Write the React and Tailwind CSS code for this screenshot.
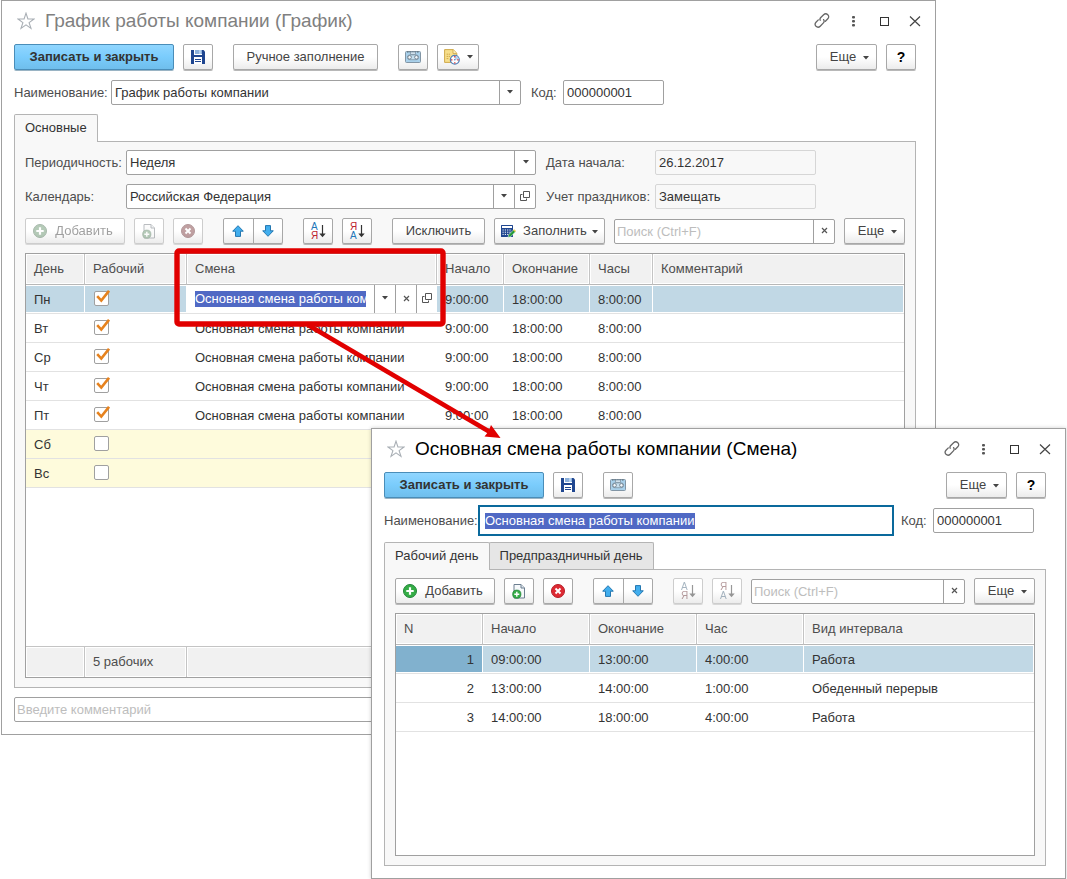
import React from "react";

/* ---------- icons ---------- */

function StarIcon() {
  return (
    <svg className="h-[18px] w-[18px] shrink-0" viewBox="0 0 18 18" fill="none" stroke="#a9afb5" strokeWidth="1.1">
      <path d="M9 1.2 L10.9 7 H17 L12.1 10.6 L14 16.4 L9 12.9 L4 16.4 L5.9 10.6 L1 7 H7.1 Z" />
    </svg>
  );
}

function LinkIcon() {
  return (
    <svg className="h-4 w-4" viewBox="0 0 16 16" fill="none" stroke="#666" strokeWidth="1.3" strokeLinecap="round">
      <path d="M6.2 7.2 C5.6 6.2 6 5.3 6.8 4.5 L9.6 1.8 C10.8 0.6 12.6 0.6 13.8 1.7 C15 2.9 15 4.6 13.8 5.8 L11.4 8.2" />
      <path d="M9.6 6.6 C10.3 7.6 10.1 9.2 9.2 10.1 L6.2 13.2 C5 14.4 3.2 14.4 2 13.3 C0.9 12.1 0.9 10.4 2 9.2 L4.3 6.9" />
    </svg>
  );
}

function DotsIcon() {
  return (
    <svg className="h-4 w-4" viewBox="0 0 16 16" fill="#555">
      <rect x="7" y="3" width="3" height="2.6" rx="1" />
      <rect x="7" y="7" width="3" height="2.6" rx="1" />
      <rect x="7" y="11" width="3" height="2.6" rx="1" />
    </svg>
  );
}

function MaximizeIcon() {
  return (
    <svg className="h-4 w-4" viewBox="0 0 16 16" fill="none" stroke="#333">
      <rect x="4.5" y="4.5" width="8" height="8" />
    </svg>
  );
}

function CloseIcon() {
  return (
    <svg className="h-4 w-4" viewBox="0 0 16 16" fill="none" stroke="#444" strokeWidth="1.2">
      <path d="M3 3.5 L13 13 M13 3.5 L3 13" />
    </svg>
  );
}

function SaveIcon() {
  return (
    <svg className="h-[14px] w-[14px]" viewBox="0 0 14 14">
      <path d="M0 0 H12.5 L14 1.5 V14 H0 Z" fill="#1f4690" />
      <rect x="3" y="0" width="8" height="5" fill="#fff" />
      <rect x="4" y="0" width="7" height="4" fill="#8db1dc" />
      <rect x="8" y="0" width="2" height="4" fill="#b4d0ee" />
      <rect x="3" y="7" width="8" height="7" fill="#fff" />
      <path d="M4 9.500 H10 M4 11.500 H10" stroke="#1f4690" />
    </svg>
  );
}

function CassetteIcon() {
  return (
    <svg className="h-[12px] w-[16px]" viewBox="0 0 16 12">
      <rect x="0.5" y="0.5" width="15" height="11" rx="1" fill="#a9d0ea" stroke="#8195a5" />
      <path d="M2 1 H14" stroke="#56646f" strokeDasharray="1.5 1" />
      <path d="M5.5 1 H10.5 V3.4 H5.5 Z" fill="#d9e9f3" stroke="#8195a5" strokeWidth="0.8" />
      <rect x="2.4" y="3.9" width="11.2" height="4.8" rx="2.4" fill="#c7e0f0" stroke="#7f93a2" strokeWidth="0.8" />
      <circle cx="4.6" cy="6.3" r="1.8" fill="#f2f6f9" stroke="#6d7f8d" strokeWidth="0.9" />
      <circle cx="11.4" cy="6.3" r="1.8" fill="#f2f6f9" stroke="#6d7f8d" strokeWidth="0.9" />
    </svg>
  );
}

function ScheduleIcon() {
  return (
    <svg className="h-4 w-4" viewBox="0 0 16 16">
      <path d="M0.6 0.6 H9.2 L12.8 4.2 V13.4 H0.6 Z" fill="#f7df8c" stroke="#cfa94a" />
      <path d="M9 0.8 V4.4 H12.6" fill="#fdf3c9" stroke="#cfa94a" strokeWidth="0.9" />
      <path d="M2.6 5.2 H6 M2.6 7.4 H6 M2.6 9.6 H5" stroke="#cfa94a" strokeDasharray="1.6 0.6" />
      <circle cx="10.8" cy="10.8" r="4.4" fill="#fff" stroke="#4d7fb8" strokeWidth="1.3" />
      <path d="M10.8 10.8 V6.8 A4 4 0 0 1 14.8 10.8 Z" fill="#b9d4ef" />
      <path d="M10.8 7 V8.4 M10.8 13.2 V14.6 M7 10.8 H8.4 M13.2 10.8 H14.6" stroke="#d33" strokeWidth="1.3" />
      <circle cx="10.8" cy="10.8" r="0.8" fill="#4d7fb8" />
    </svg>
  );
}

function Caret() {
  return (
    <svg className="h-[4px] w-[6px] shrink-0" viewBox="0 0 6 4">
      <path d="M0 0 H6 L3 3.5 Z" fill="#444" />
    </svg>
  );
}

function AddIcon() {
  return (
    <svg className="h-[14px] w-[14px] shrink-0" viewBox="0 0 14 14">
      <circle cx="7" cy="7" r="6.5" fill="#35ad46" stroke="#23863a" />
      <path d="M7 3.3 V10.7 M3.3 7 H10.7" stroke="#fff" strokeWidth="2.2" />
    </svg>
  );
}

function CopyIcon() {
  return (
    <svg className="h-[15px] w-[14px]" viewBox="0 0 14 15">
      <path d="M2 0.5 H9 L12.5 4 V14 H2 Z" fill="#f6f9fb" stroke="#6c7f90" />
      <path d="M9 0.5 V4 H12.5" fill="#dfe7ee" stroke="#6c7f90" />
      <circle cx="4.8" cy="10.2" r="4.1" fill="#35ad46" stroke="#23863a" strokeWidth="0.8" />
      <path d="M4.8 7.7 V12.7 M2.3 10.2 H7.3" stroke="#fff" strokeWidth="1.4" />
    </svg>
  );
}

function DeleteIcon() {
  return (
    <svg className="h-[14px] w-[14px]" viewBox="0 0 14 14">
      <circle cx="7" cy="7" r="6.5" fill="#dd2a33" stroke="#b71e28" />
      <path d="M4.5 4.5 L9.5 9.5 M9.5 4.5 L4.5 9.5" stroke="#fff" strokeWidth="1.9" />
    </svg>
  );
}

function ArrowIcon({ down }) {
  return (
    <svg className={down ? "h-3 w-3 rotate-180" : "h-3 w-3"} viewBox="0 0 12 12">
      <path d="M6 0.7 L11.3 6.2 H8.5 V11.4 H3.5 V6.2 H0.7 Z" fill="#41aeee" stroke="#2477b0" strokeLinejoin="round" />
    </svg>
  );
}

function SortIcon({ descending }) {
  return (
    <svg className="h-[18px] w-[16px]" viewBox="0 0 16 18" fontFamily="Liberation Sans, Arial, sans-serif" fontSize="10">
      <text x="1" y="8" fill={descending ? "#bd2430" : "#2377b8"}>
        {descending ? "Я" : "А"}
      </text>
      <text x="1" y="17" fill={descending ? "#2377b8" : "#bd2430"}>
        {descending ? "А" : "Я"}
      </text>
      <path d="M12.5 3 V13" stroke="#333" strokeWidth="1.2" />
      <path d="M9.3 11.5 H15.7 L12.5 15.2 Z" fill="#333" />
    </svg>
  );
}

function FillIcon() {
  return (
    <svg className="h-[14px] w-[15px] shrink-0" viewBox="0 0 15 14">
      <rect x="0" y="1" width="12" height="12" rx="0.5" fill="#1f4690" />
      <rect x="1" y="2" width="10" height="2" fill="#fff" />
      <path d="M1.5 6 H10.8 M1.5 8.2 H10.8 M1.5 10.4 H10.8" stroke="#fff" strokeWidth="1" strokeDasharray="1.2 1.1" />
      <path d="M7 13.4 L7.6 10.8 L12.6 5.8 L14.6 7.7 L9.6 12.7 Z" fill="#249a3a" stroke="#fff" strokeWidth="0.5" />
      <path d="M12.2 6.2 L13.2 5.2 L15 7 L14.1 8 Z" fill="#f3cf4b" />
    </svg>
  );
}

function ClearIcon() {
  return (
    <svg className="h-[7px] w-[7px]" viewBox="0 0 7 7" stroke="#555" strokeWidth="1.2">
      <path d="M1 1 L6 6 M6 1 L1 6" />
    </svg>
  );
}

function OpenIcon() {
  return (
    <svg className="h-[10px] w-[10px]" viewBox="0 0 10 10" fill="none" stroke="#555">
      <path d="M3.5 0.5 H9.5 V6.5 H3.5 Z M2.5 3.5 H0.5 V9.5 H6.5 V7.5" />
    </svg>
  );
}

/* ---------- controls ---------- */

const FACE = "flex h-[26px] shrink-0 items-center justify-center border bg-linear-to-b from-white from-50% to-[#ececec]";
const LIVE = "border-[#a8a8a8] shadow-[0_1px_0_#b8b8b8]";
const MUTED = "border-[#cdcdcd] shadow-[0_1px_0_#d8d8d8]";

function Button({ className = "w-[30px]", disabled = false, label, children }) {
  return (
    <button
      type="button"
      aria-label={label}
      disabled={disabled}
      className={`${FACE} ${disabled ? MUTED : LIVE} rounded-xs text-[#444] ${className}`}
    >
      <span className={`flex items-center ${disabled ? "opacity-50 grayscale-65" : ""}`}>{children}</span>
    </button>
  );
}

function MoreButton() {
  return (
    <Button className="w-[61px]">
      <span className="pl-1.5">Еще</span>
      <span className="pt-0.5 pl-[7px]"><Caret /></span>
    </Button>
  );
}

function HelpButton() {
  return <Button><b className="text-sm text-black">?</b></Button>;
}

function PrimaryButton() {
  return (
    <button
      type="button"
      className="h-[26px] w-[160px] shrink-0 rounded-xs border border-[#4a8db8] bg-linear-to-b from-[#90d6ff] via-[#7accfc] to-[#6fbeec] font-bold text-[#333] shadow-[0_1px_0_#9ab4c4]"
    >
      Записать и закрыть
    </button>
  );
}

function FieldButton({ label, children }) {
  return (
    <button type="button" aria-label={label} className="flex w-[21px] shrink-0 items-center justify-center border-l border-[#a0a0a0] pb-0.5">
      {children}
    </button>
  );
}

const BOX = "flex h-[25px] overflow-hidden rounded-xs border border-[#a0a0a0] bg-white";

function TextField({ id, label, labelClass, value, className, children }) {
  return (
    <>
      <label htmlFor={id} className={`shrink-0 text-[#4d4d4d] ${labelClass}`}>{label}</label>
      <div className={`${BOX} shrink-0 ${className}`}>
        <input id={id} defaultValue={value} className="min-w-0 flex-1 px-[3px] outline-none" />
        {children}
      </div>
    </>
  );
}

function ReadOnlyField({ id, label, value }) {
  return (
    <>
      <label htmlFor={id} className="ml-2.5 w-[109px] shrink-0 text-[#4d4d4d]">{label}</label>
      <input id={id} readOnly value={value} className="h-[25px] w-[161px] rounded-xs border border-[#d6d6d6] bg-transparent px-[3px] outline-none" />
    </>
  );
}

function SearchField({ label }) {
  return (
    <div className={`${BOX} w-0 flex-1`}>
      <input type="text" aria-label={label} placeholder="Поиск (Ctrl+F)" className="min-w-0 flex-1 px-0.5 outline-none placeholder:text-[#bdbdbd]" />
      <FieldButton label="Очистить"><ClearIcon /></FieldButton>
    </div>
  );
}

function MoveButtons() {
  return (
    <div className={`${FACE} ${LIVE} ml-[11px] w-[60px] rounded-xs`}>
      <button type="button" aria-label="Вверх" className="flex h-full flex-1 items-center justify-center border-r border-[#a8a8a8]"><ArrowIcon /></button>
      <button type="button" aria-label="Вниз" className="flex h-full flex-1 items-center justify-center"><ArrowIcon down /></button>
    </div>
  );
}

function RowButtons({ disabled }) {
  return (
    <>
      <Button className="w-[100px]" disabled={disabled}>
        <AddIcon />
        <span className="pr-1 pl-2">Добавить</span>
      </Button>
      <Button label="Скопировать" disabled={disabled}><CopyIcon /></Button>
      <Button label="Удалить" disabled={disabled}><DeleteIcon /></Button>
      <MoveButtons />
    </>
  );
}

function SortButtons({ disabled }) {
  return (
    <>
      <span className="ml-[11px]"><Button label="Сортировать по возрастанию" disabled={disabled}><SortIcon /></Button></span>
      <Button label="Сортировать по убыванию" disabled={disabled}><SortIcon descending /></Button>
    </>
  );
}

function Checkbox({ label, checked }) {
  return (
    <span className="relative mb-1 ml-px block h-[15px] w-[15px]">
      <input type="checkbox" aria-label={label} defaultChecked={checked} className="peer block h-[15px] w-[15px] appearance-none rounded-xs border border-[#a0a0a0] bg-white" />
      <svg className="pointer-events-none absolute -top-px left-[2px] hidden h-[13px] w-[14px] peer-checked:block" viewBox="0 0 14 13" fill="none" stroke="#e6821e">
        <path d="M1.2 6.2 L5.3 10.6 L13 0.8" strokeWidth="2.6" />
      </svg>
    </span>
  );
}

/* ---------- window parts ---------- */

function TitleBar({ title, className }) {
  return (
    <header className="mb-1 flex h-[39px] items-center pr-3 pl-[15px]">
      <StarIcon />
      <h1 className={`flex-1 pt-px pl-2.5 text-[19px] leading-6 ${className}`}>{title}</h1>
      <div className="flex gap-[15px]">
        <button type="button" aria-label="Получить ссылку"><LinkIcon /></button>
        <button type="button" aria-label="Меню"><DotsIcon /></button>
        <button type="button" aria-label="Развернуть"><MaximizeIcon /></button>
        <button type="button" aria-label="Закрыть"><CloseIcon /></button>
      </div>
    </header>
  );
}

function HeadCell({ children, last }) {
  return (
    <th className={`border-b border-b-[#b8b8b8] p-0 text-left font-normal text-[#4d4d4d] ${last ? "" : "border-r border-r-[#c4c4c4]"}`}>
      <div className="m-px flex h-7 items-center bg-[#f1f1f1] px-[7px]">{children}</div>
    </th>
  );
}

function Cell({ children, selected, className = "", fill = "bg-[#c1d8e5]" }) {
  return (
    <td className={`border-b border-[#e2e2e2] p-0 ${className}`}>
      <div className={`my-px mr-px flex h-[26px] items-center px-2 pt-0.5 ${selected ? fill : ""}`}>{children}</div>
    </td>
  );
}

function FootCell({ children }) {
  return (
    <td className="border-t border-r border-t-[#c4c4c4] border-r-[#c4c4c4] p-0 text-[#4d4d4d]">
      <div className="m-px flex h-7 items-center bg-[#f1f1f1] px-[7px]">{children}</div>
    </td>
  );
}

const DAYS = [
  { day: "Пн", working: true },
  { day: "Вт", working: true },
  { day: "Ср", working: true },
  { day: "Чт", working: true },
  { day: "Пт", working: true },
  { day: "Сб", working: false },
  { day: "Вс", working: false },
];

const SHIFT = "Основная смена работы компании";

function ShiftEditor() {
  return (
    <td className="border-b border-[#e2e2e2] p-0">
      <div className="flex h-7">
        <input
          aria-label="Смена"
          defaultValue={SHIFT}
          className="min-w-0 flex-1 bg-[linear-gradient(#5069c4,#5069c4)] bg-[length:100%_16px] bg-left bg-no-repeat bg-clip-content bg-origin-content px-2 text-white outline-none"
        />
        <FieldButton label="Выбрать из списка"><Caret /></FieldButton>
        <FieldButton label="Очистить"><ClearIcon /></FieldButton>
        <FieldButton label="Открыть"><OpenIcon /></FieldButton>
      </div>
    </td>
  );
}

function DaysTable() {
  return (
    <div className="border border-[#a0a0a0] bg-white">
      <table className="w-full table-fixed border-separate border-spacing-0">
        <colgroup>
          <col className="w-[59px]" />
          <col className="w-[102px]" />
          <col className="w-[250px]" />
          <col className="w-[67px]" />
          <col className="w-[86px]" />
          <col className="w-[63px]" />
          <col />
        </colgroup>
        <thead>
          <tr>
            <HeadCell>День</HeadCell>
            <HeadCell>Рабочий</HeadCell>
            <HeadCell>Смена</HeadCell>
            <HeadCell>Начало</HeadCell>
            <HeadCell>Окончание</HeadCell>
            <HeadCell>Часы</HeadCell>
            <HeadCell last>Комментарий</HeadCell>
          </tr>
        </thead>
        <tbody>
          {DAYS.map(({ day, working }, i) => {
            const selected = i === 0;
            const tint = working ? "" : "bg-[#fefbdc]";
            return (
              <tr key={day}>
                <Cell selected={selected} className={tint}>{day}</Cell>
                <Cell selected={selected} className={tint}><Checkbox label={`${day}: рабочий`} checked={working} /></Cell>
                {selected ? <ShiftEditor /> : <Cell className={tint}>{working ? SHIFT : ""}</Cell>}
                <Cell selected={selected} className={tint}>{working ? "9:00:00" : ""}</Cell>
                <Cell selected={selected} className={tint}>{working ? "18:00:00" : ""}</Cell>
                <Cell selected={selected} className={tint}>{working ? "8:00:00" : ""}</Cell>
                <Cell selected={selected} className={tint} />
              </tr>
            );
          })}
          <tr><td colSpan={7} className="h-[158px] p-0" /></tr>
        </tbody>
        <tfoot>
          <tr>
            <FootCell />
            <FootCell>5 рабочих</FootCell>
            <td colSpan={5} className="border-t border-t-[#c4c4c4] p-0">
              <div className="m-px h-7 bg-[#f1f1f1]" />
            </td>
          </tr>
        </tfoot>
      </table>
    </div>
  );
}

const INTERVALS = [
  ["1", "09:00:00", "13:00:00", "4:00:00", "Работа"],
  ["2", "13:00:00", "14:00:00", "1:00:00", "Обеденный перерыв"],
  ["3", "14:00:00", "18:00:00", "4:00:00", "Работа"],
];

function IntervalsTable() {
  return (
    <div className="border border-[#a0a0a0] bg-white">
      <table className="w-full table-fixed border-separate border-spacing-0">
        <colgroup>
          <col className="w-[87px]" />
          <col className="w-[107px]" />
          <col className="w-[107px]" />
          <col className="w-[107px]" />
          <col />
        </colgroup>
        <thead>
          <tr>
            <HeadCell>N</HeadCell>
            <HeadCell>Начало</HeadCell>
            <HeadCell>Окончание</HeadCell>
            <HeadCell>Час</HeadCell>
            <HeadCell last>Вид интервала</HeadCell>
          </tr>
        </thead>
        <tbody>
          {INTERVALS.map((row, i) => (
            <tr key={row[0]}>
              {row.map((text, j) => (
                <Cell key={j} selected={i === 0} fill={j === 0 ? "bg-[#81b1ce]" : "bg-[#c1d8e5]"}>
                  <span className={j === 0 ? "flex-1 text-right" : ""}>{text}</span>
                </Cell>
              ))}
            </tr>
          ))}
          <tr><td colSpan={5} className="h-[123px] p-0" /></tr>
        </tbody>
      </table>
    </div>
  );
}

const WINDOW = "border border-[#a0a0a0] bg-white pb-3";
const PANEL = "flex flex-col border border-[#b4b4b4] bg-[#f8f8f8] px-2.5 pt-2 pb-[9px]";
const ACTIVE_TAB = "relative -mb-px h-7 rounded-t-xs border border-b-0 border-[#b4b4b4] bg-[#f8f8f8] px-2.5 pb-0.5 text-[#333]";

function ScheduleWindow() {
  return (
    <section className={`${WINDOW} mr-[131px] ml-px`}>
      <TitleBar title="График работы компании (График)" className="text-[#808080]" />
      <div className="pr-[19px] pl-3">
        <div className="flex gap-[9px]">
          <PrimaryButton />
          <Button label="Записать"><SaveIcon /></Button>
          <span className="ml-[11px]"><Button className="w-[145px]">Ручное заполнение</Button></span>
          <span className="ml-[11px]"><Button label="Вложения"><CassetteIcon /></Button></span>
          <Button className="w-[42px]" label="Расписание">
            <ScheduleIcon />
            <span className="pl-[7px]"><Caret /></span>
          </Button>
          <span className="flex-1" />
          <MoreButton />
          <HelpButton />
        </div>
        <div className="mt-2.5 flex items-center">
          <TextField id="schedule-name" label="Наименование:" labelClass="w-[97px]" value="График работы компании" className="w-[410px]">
            <FieldButton label="Выбрать из списка"><Caret /></FieldButton>
          </TextField>
          <TextField id="schedule-code" label="Код:" labelClass="ml-2.5 w-8" value="000000001" className="w-[101px]" />
        </div>
        <div role="tablist" className="mt-[9px] flex">
          <button type="button" role="tab" aria-selected="true" className={ACTIVE_TAB}>Основные</button>
        </div>
        <div className={PANEL}>
          <div className="flex items-center">
            <label htmlFor="period" className="w-[101px] shrink-0 text-[#4d4d4d]">Периодичность:</label>
            <div className="relative">
              <select id="period" className="block h-[25px] w-[410px] appearance-none rounded-xs border border-[#a0a0a0] bg-white px-[3px] outline-none">
                <option>Неделя</option>
              </select>
              <span className="pointer-events-none absolute inset-y-0 right-0 flex w-[22px] items-center justify-center border-l border-[#a0a0a0] pb-0.5"><Caret /></span>
            </div>
            <ReadOnlyField id="start-date" label="Дата начала:" value="26.12.2017" />
          </div>
          <div className="mt-[9px] flex items-center">
            <TextField id="calendar" label="Календарь:" labelClass="w-[101px]" value="Российская Федерация" className="w-[410px]">
              <FieldButton label="Выбрать из списка"><Caret /></FieldButton>
              <FieldButton label="Открыть"><OpenIcon /></FieldButton>
            </TextField>
            <ReadOnlyField id="holidays" label="Учет праздников:" value="Замещать" />
          </div>
          <div className="my-[9px] flex items-end gap-[9px]">
            <RowButtons disabled />
            <SortButtons />
            <span className="ml-[11px]"><Button className="w-[93px]">Исключить</Button></span>
            <Button className="w-[111px]">
              <FillIcon />
              <span className="pl-[7px]">Заполнить</span>
              <span className="pt-0.5 pl-[5px]"><Caret /></span>
            </Button>
            <SearchField label="Поиск по дням" />
            <MoreButton />
          </div>
          <DaysTable />
        </div>
        <input aria-label="Комментарий" placeholder="Введите комментарий" className="mt-[9px] block h-[25px] w-full rounded-xs border border-[#a0a0a0] px-0.5 outline-none placeholder:text-[#bdbdbd]" />
      </div>
    </section>
  );
}

function ShiftWindow() {
  return (
    <section className={`${WINDOW} absolute top-[428px] right-px left-[371px] shadow-[0_0_4px_rgba(0,0,0,0.2)]`}>
      <TitleBar title="Основная смена работы компании (Смена)" className="text-black" />
      <div className="pr-[19px] pl-3">
        <div className="flex gap-[9px]">
          <PrimaryButton />
          <Button label="Записать"><SaveIcon /></Button>
          <span className="ml-[11px]"><Button label="Вложения"><CassetteIcon /></Button></span>
          <span className="flex-1" />
          <MoreButton />
          <HelpButton />
        </div>
        <div className="mt-2.5 flex items-center">
          <label htmlFor="shift-name" className="w-[97px] shrink-0 text-[#4d4d4d]">Наименование:</label>
          <input
            id="shift-name"
            defaultValue={SHIFT}
            className="h-[25px] w-[410px] bg-[linear-gradient(#5069c4,#5069c4)] bg-[length:210px_16px] bg-left bg-no-repeat bg-origin-content px-1 text-white outline-2 outline-offset-1 outline-[#0a699c]"
          />
          <TextField id="shift-code" label="Код:" labelClass="ml-2.5 w-8" value="000000001" className="w-[101px]" />
        </div>
        <div role="tablist" className="mt-[9px] flex">
          <button type="button" role="tab" aria-selected="true" className={ACTIVE_TAB}>Рабочий день</button>
          <button type="button" role="tab" aria-selected="false" className="-ml-px h-[27px] rounded-t-xs border border-b-0 border-[#b4b4b4] bg-[#e6e6e6] px-2.5 text-[#333]">
            Предпраздничный день
          </button>
        </div>
        <div className={PANEL}>
          <div className="mb-[9px] flex items-end gap-[9px]">
            <RowButtons />
            <SortButtons disabled />
            <SearchField label="Поиск по интервалам" />
            <MoreButton />
          </div>
          <IntervalsTable />
        </div>
      </div>
    </section>
  );
}

function Callout() {
  return (
    <svg className="pointer-events-none absolute top-[240px] left-[170px] h-[210px] w-[340px]" viewBox="170 240 340 210">
      <rect x="177" y="251" width="266" height="73" rx="2" fill="none" stroke="#e10000" strokeWidth="5.4" />
      <path d="M308 325 L489 431.500" stroke="#e10000" strokeWidth="4.6" />
      <path d="M500.500 438 L484.500 436.500 L488.500 431.500 L491 425 Z" fill="#e10000" />
    </svg>
  );
}

export default function App() {
  return (
    <main className="relative min-h-screen bg-white font-['Liberation_Sans',Arial,sans-serif] text-[13px] leading-4 text-[#333]">
      <ScheduleWindow />
      <ShiftWindow />
      <Callout />
    </main>
  );
}
